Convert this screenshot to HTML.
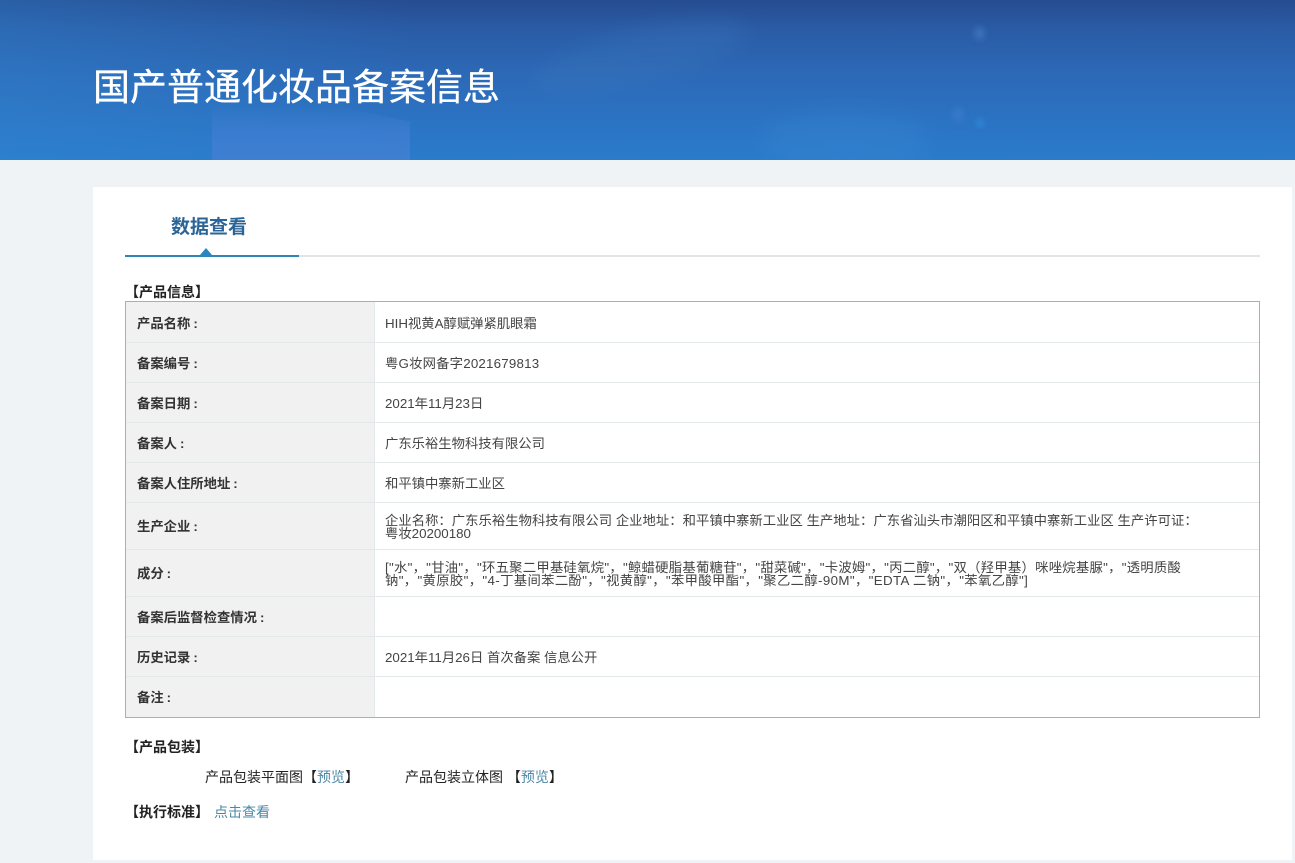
<!DOCTYPE html>
<html lang="zh-CN">
<head>
<meta charset="utf-8">
<style>
html,body{margin:0;padding:0}
body{width:1295px;height:863px;overflow:hidden;position:relative;background:#eff3f6;font-family:"Liberation Sans","Microsoft YaHei","Noto Sans CJK SC",sans-serif;font-size:13.33px;color:#333}
.a{position:absolute;white-space:nowrap}
#banner{left:0;top:0;width:1295px;height:160px;background:linear-gradient(180deg,#264c91 0,#2a5ca6 30px,#2c69b7 75px,#2b74c4 125px,#2a7bca 160px);overflow:hidden}
#card{left:93px;top:187px;width:1199px;height:673px;background:#fff}
.l{left:137px;font-weight:bold;line-height:16px;color:#333;width:230px}
.l i{font-style:normal;margin-left:3px}
.v{left:385px;line-height:16px;color:#444}
.m{left:385px;line-height:13px;color:#444}
.h{left:126px;width:1133px;height:1px;background:#e3e8eb}
.b{font-weight:bold;color:#222;line-height:16px;font-size:14px}
.k{color:#222;line-height:16px;font-size:14px}
.lk{color:#4a88a8}
</style>
</head>
<body>
<div id="banner" class="a">
  <div class="a" style="left:0;top:0;width:420px;height:160px;background:linear-gradient(90deg,rgba(50,140,215,.3),rgba(50,140,215,0))"></div>
  <div class="a" style="left:212px;top:105px;width:198px;height:55px;background:linear-gradient(180deg,rgba(70,125,210,0),rgba(66,126,210,.6) 45%,#3f7fd2);clip-path:polygon(0 0,60% 0,100% 30%,100% 100%,0 100%)"></div>
  <div class="a" style="left:530px;top:30px;width:220px;height:55px;border-radius:50%;background:#3d79bd;opacity:.28;filter:blur(10px);transform:rotate(-14deg)"></div>
  <div class="a" style="left:760px;top:112px;width:170px;height:60px;border-radius:50%;background:#3a8ad4;opacity:.3;filter:blur(12px)"></div>
  <div class="a" style="left:974px;top:27px;width:11px;height:13px;border-radius:50%;background:#3a72b8;filter:blur(3px)"></div>
  <div class="a" style="left:952px;top:107px;width:12px;height:16px;border-radius:50%;background:#3579c8;filter:blur(3px)"></div>
  <div class="a" style="left:975px;top:118px;width:10px;height:10px;border-radius:50%;background:#2d80d0;filter:blur(2px)"></div>
  <div class="a" style="left:93px;top:63px;font-size:37px;line-height:50px;color:#fff;font-weight:normal;-webkit-text-stroke:.3px #fff">国产普通化妆品备案信息</div>
</div>

<div id="card" class="a"></div>

<div class="a" style="left:171px;top:215px;font-size:19px;line-height:26px;font-weight:bold;color:#2b6496">数据查看</div>
<div class="a" style="left:125px;top:255px;width:1135px;height:2px;background:#e2e5e7"></div>
<div class="a" style="left:125px;top:255px;width:174px;height:2px;background:#2f86b4"></div>
<div class="a" style="left:200px;top:248px;width:0;height:0;border-left:6px solid transparent;border-right:6px solid transparent;border-bottom:7px solid #2a86c0"></div>

<div class="a b" style="left:125px;top:284px">【产品信息】</div>

<div class="a" style="left:125px;top:301px;width:1133px;height:415px;border:1px solid #86b9e2;box-sizing:content-box"></div>
<div class="a" style="left:126px;top:302px;width:248px;height:415px;background:#f1f1f1"></div>
<div class="a" style="left:374px;top:302px;width:1px;height:415px;background:#e3e8eb"></div>
<div class="a h" style="top:342px"></div>
<div class="a h" style="top:382px"></div>
<div class="a h" style="top:422px"></div>
<div class="a h" style="top:462px"></div>
<div class="a h" style="top:502px"></div>
<div class="a h" style="top:549px"></div>
<div class="a h" style="top:596px"></div>
<div class="a h" style="top:636px"></div>
<div class="a h" style="top:676px"></div>

<div class="a l" style="top:316px">产品名称<i>:</i></div>
<div class="a l" style="top:356px">备案编号<i>:</i></div>
<div class="a l" style="top:396px">备案日期<i>:</i></div>
<div class="a l" style="top:436px">备案人<i>:</i></div>
<div class="a l" style="top:476px">备案人住所地址<i>:</i></div>
<div class="a l" style="top:519px">生产企业<i>:</i></div>
<div class="a l" style="top:566px">成分<i>:</i></div>
<div class="a l" style="top:610px">备案后监督检查情况<i>:</i></div>
<div class="a l" style="top:650px">历史记录<i>:</i></div>
<div class="a l" style="top:690px">备注<i>:</i></div>

<div class="a v" style="top:316px">HIH视黄A醇赋弹紧肌眼霜</div>
<div class="a v" style="top:356px;letter-spacing:.2px">粤G妆网备字2021679813</div>
<div class="a v" style="top:396px">2021年11月23日</div>
<div class="a v" style="top:436px">广东乐裕生物科技有限公司</div>
<div class="a v" style="top:476px">和平镇中寨新工业区</div>
<div class="a m" style="top:514px"><span style="letter-spacing:.03px">企业名称：广东乐裕生物科技有限公司 企业地址：和平镇中寨新工业区 生产地址：广东省汕头市潮阳区和平镇中寨新工业区 生产许可证：</span><br>粤妆20200180</div>
<div class="a m" style="top:561px"><span style="letter-spacing:.27px">["水"，"甘油"，"环五聚二甲基硅氧烷"，"鲸蜡硬脂基葡糖苷"，"甜菜碱"，"卡波姆"，"丙二醇"，"双（羟甲基）咪唑烷基脲"，"透明质酸</span><br><span style="letter-spacing:.36px">钠"，"黄原胶"，"4-丁基间苯二酚"，"视黄醇"，"苯甲酸甲酯"，"聚乙二醇-90M"，"EDTA 二钠"，"苯氧乙醇"]</span></div>
<div class="a v" style="top:650px">2021年11月26日 首次备案 信息公开</div>

<div class="a b" style="left:125px;top:739px">【产品包装】</div>
<div class="a k" style="left:205px;top:769px">产品包装平面图【<span class="lk">预览</span>】</div>
<div class="a k" style="left:405px;top:769px">产品包装立体图 【<span class="lk">预览</span>】</div>
<div class="a b" style="left:125px;top:804px">【执行标准】</div>
<div class="a lk" style="left:214px;top:804px;line-height:16px;font-size:14px">点击查看</div>
</body>
</html>
